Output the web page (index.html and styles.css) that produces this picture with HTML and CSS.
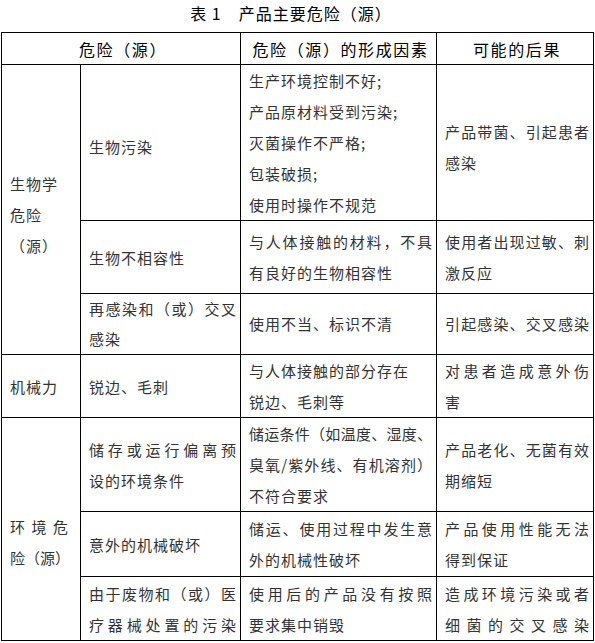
FILE: index.html
```html
<!DOCTYPE html>
<html lang="zh-CN">
<head>
<meta charset="utf-8">
<title>表1 产品主要危险（源）</title>
<link rel="stylesheet" href="styles.css">
</head>
<body>
<div class="page">
  <h1 class="title"><span class="num">表 1</span>产品主要危险（源）</h1>
  <table class="hazards">
    <colgroup>
      <col class="c1"><col class="c2"><col class="c3"><col class="c4">
    </colgroup>
    <thead>
      <tr class="r-head">
        <th colspan="2">危险（源）</th>
        <th>危险（源）的形成因素</th>
        <th>可能的后果</th>
      </tr>
    </thead>
    <tbody>
      <tr class="r1">
        <td rowspan="3" class="cat cat-bio">生物学<br>危险<br>（源）</td>
        <td class="shift">生物污染</td>
        <td>生产环境控制不好;<br>产品原材料受到污染;<br>灭菌操作不严格;<br>包装破损;<br>使用时操作不规范</td>
        <td class="shift"><span class="j">产品带菌、引起患者</span>感染</td>
      </tr>
      <tr class="r2">
        <td>生物不相容性</td>
        <td><span class="j">与人体接触的材料，不具</span>有良好的生物相容性</td>
        <td><span class="j">使用者出现过敏、刺</span>激反应</td>
      </tr>
      <tr class="r3">
        <td><span class="j">再感染和（或）交叉</span>感染</td>
        <td>使用不当、标识不清</td>
        <td><span class="j">引起感染、交叉感染</span></td>
      </tr>
      <tr class="r4">
        <td class="cat">机械力</td>
        <td>锐边、毛刺</td>
        <td>与人体接触的部分存在<br>锐边、毛刺等</td>
        <td><span class="j">对患者造成意外伤</span>害</td>
      </tr>
      <tr class="r5">
        <td rowspan="3" class="cat cat-env"><span class="j">环境危</span><span class="j">险（源）</span></td>
        <td><span class="j">储存或运行偏离预</span>设的环境条件</td>
        <td><span class="j">储运条件（如温度、湿度、</span><span class="j">臭氧/紫外线、有机溶剂）</span>不符合要求</td>
        <td><span class="j">产品老化、无菌有效</span>期缩短</td>
      </tr>
      <tr class="r6">
        <td>意外的机械破坏</td>
        <td><span class="j">储运、使用过程中发生意</span>外的机械性破坏</td>
        <td><span class="j">产品使用性能无法</span>得到保证</td>
      </tr>
      <tr class="r7">
        <td><span class="j">由于废物和（或）医</span><span class="j">疗器械处置的污染</span></td>
        <td><span class="j">使用后的产品没有按照</span>要求集中销毁</td>
        <td><span class="j">造成环境污染或者</span><span class="j">细菌的交叉感染</span></td>
      </tr>
    </tbody>
  </table>
</div>
</body>
</html>
```

FILE: styles.css
```css
html, body {
  margin: 0;
  padding: 0;
  background: #ffffff;
}

body {
  font-family: "Noto Sans CJK SC", "Noto Sans", sans-serif;
  color: #000;
}

.page {
  padding: 0 0 0 1px;
  width: 594px;
}

.title {
  margin: 0;
  height: 29px;
  padding: 3px 14px 0 0;
  font-size: 16px;
  font-weight: normal;
  letter-spacing: 1px;
  line-height: 20px;
  text-align: center;
  color: #000;
}

.title .num {
  margin-right: 17px;
}

.hazards {
  border-collapse: collapse;
  table-layout: fixed;
  width: 592px;
}

.c1 { width: 79px; }
.c2 { width: 160px; }
.c3 { width: 196px; }
.c4 { width: 157px; }

.hazards th,
.hazards td {
  border: 1px solid #000;
  vertical-align: middle;
  padding: 0 4px 0 8px;
}

.hazards th {
  font-size: 16px;
  font-weight: normal;
  letter-spacing: 1.6px;
  line-height: 20px;
  text-align: center;
  color: #000;
}

.hazards td {
  font-size: 15px;
  letter-spacing: 1px;
  line-height: 31px;
  text-align: left;
  color: #333;
}

.hazards td .j {
  display: block;
  letter-spacing: 0;
  text-align: justify;
  text-align-last: justify;
}

.r-head { height: 32px; }
.r1 { height: 156px; }
.r2 { height: 73px; }
.r3 { height: 61px; }
.r4 { height: 63px; }
.r5 { height: 94px; }
.r6 { height: 65px; }
.r7 { height: 64px; }

.r3 td {
  line-height: 30px;
}

.hazards td.shift {
  padding-top: 8px;
}

.hazards td.cat-bio {
  padding-top: 10px;
}

.hazards td.cat-env {
  padding-top: 26px;
  padding-right: 12px;
}
```
